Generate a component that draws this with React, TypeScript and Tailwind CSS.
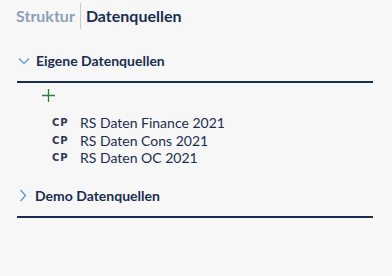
import React from "react";

const sources = ["RS Daten Finance 2021", "RS Daten Cons 2021", "RS Daten OC 2021"];

const ChevronDown = () => (
  <svg width="12" height="8" viewBox="0 0 12 8" fill="none" stroke="#5a8fd0" strokeWidth="1.2">
    <path d="M1 1.5 L6 6.5 L11 1.5" />
  </svg>
);

const ChevronRight = () => (
  <svg width="8" height="13" viewBox="0 0 8 13" fill="none" stroke="#5a8fd0" strokeWidth="1.2">
    <path d="M1.5 1 L6.5 6.5 L1.5 12" />
  </svg>
);

export default function App() {
  return (
    <div className="w-[392px] h-[276px] bg-[#f7f7f7] text-[#1b2d4f] font-['Lato',sans-serif]">
      <div className="flex items-center h-[30px] pt-[2px] pl-[16px]">
        <span className="text-[16px] font-bold text-[#8fa1b6]">Struktur</span>
        <span className="w-px h-[26px] bg-[#c8ccd2] mx-[5px]" />
        <span className="text-[16px] font-bold text-[#1b2d4f]">Datenquellen</span>
      </div>

      <div className="px-[17px] mt-[20px] w-[390px]">
        <div className="flex items-center gap-[6px] h-[21px] pl-[1px]">
          <ChevronDown />
          <span className="text-[14px] font-bold">Eigene Datenquellen</span>
        </div>
        <div className="h-[2px] bg-[#1b2d4f] mt-[10px]" />

        <div className="pl-[25px] pt-[6px]">
          <svg width="13" height="13" viewBox="0 0 13 13" stroke="#2e7d44" strokeWidth="1.3">
            <path d="M6.5 0 V13 M0 6.5 H13" />
          </svg>
        </div>

        <div className="pl-[35px] pt-[12px] flex flex-col">
          {sources.map((s) => (
            <div key={s} className="flex items-center h-[17.5px]">
              <span className="w-[28px] text-[10px] font-bold tracking-[1px] text-[#2b3a55] font-['DejaVu_Sans',sans-serif]">CP</span>
              <span className="text-[14px] text-[#1b2d4f]">{s}</span>
            </div>
          ))}
        </div>

        <div className="flex items-center gap-[8px] h-[21px] pl-[2px] mt-[18px]">
          <ChevronRight />
          <span className="text-[14px] font-bold">Demo Datenquellen</span>
        </div>
        <div className="h-[2px] bg-[#1b2d4f] mt-[10px]" />
      </div>
    </div>
  );
}
